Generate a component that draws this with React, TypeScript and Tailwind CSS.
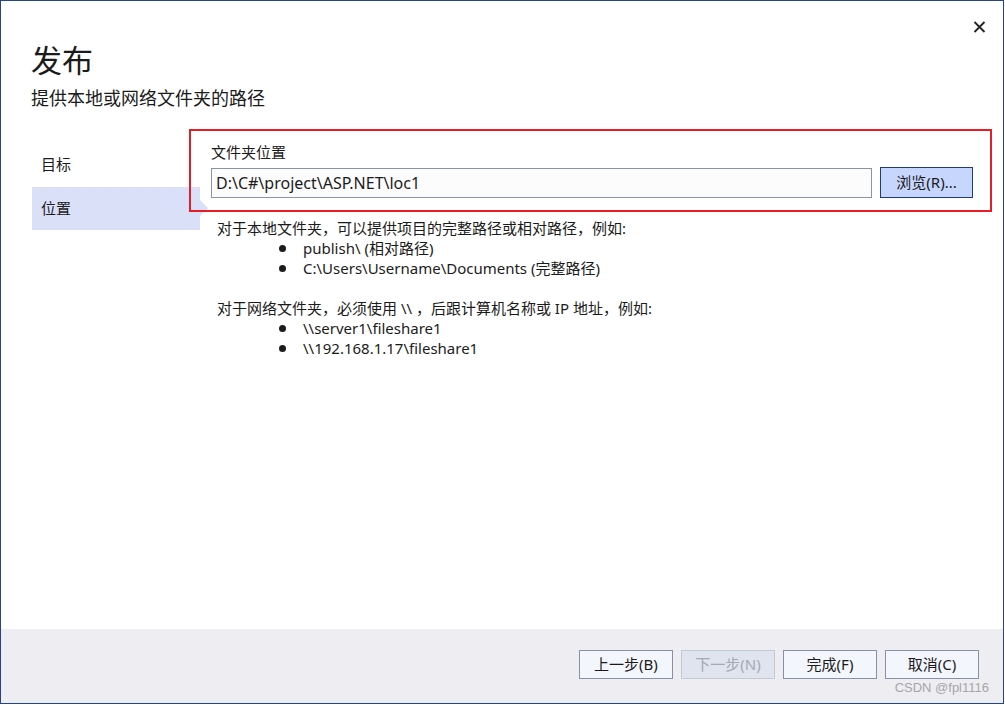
import React from 'react';

const Bullet = ({ children }: { children: React.ReactNode }) => (
  <li className="flex items-center pl-[62px] h-[20px]">
    <span className="w-[7px] h-[7px] rounded-full bg-[#1b1b1b] shrink-0"></span>
    <span className="ml-[17px]">{children}</span>
  </li>
);

const FooterButton = ({ label, disabled }: { label: string; disabled?: boolean }) => (
  <button
    type="button"
    disabled={disabled}
    className={
      disabled
        ? 'w-[94px] h-[29px] border border-[#c3cad6] bg-[#dfe4ee] text-[#a3a9b5] text-[15px] leading-none'
        : 'w-[94px] h-[29px] border border-[#8691a3] bg-[#f4f6fe] text-[#1b1b1b] text-[15px] leading-none'
    }
  >
    {label}
  </button>
);

export default function App() {
  return (
    <div className="w-[1004px] h-[704px] border border-[#24458a] bg-white flex flex-col relative text-[#1b1b1b] font-['Noto_Sans','Noto_Sans_CJK_SC',sans-serif]">
      <div className="flex-1 flex flex-col">
        {/* header */}
        <div className="flex justify-between items-start">
          <div className="pl-[30px] pt-[42px]">
            <h1 className="text-[31px] leading-[34px] font-normal">发布</h1>
            <p className="mt-[10px] text-[18px] leading-[22px]">提供本地或网络文件夹的路径</p>
          </div>
          <button type="button" className="mt-[19px] mr-[17px] w-[13px] h-[13px] flex items-center justify-center">
            <svg width="13" height="12" viewBox="0 0 13 12">
              <path d="M1.5 1 L11.5 11 M11.5 1 L1.5 11" stroke="#222" strokeWidth="1.8" fill="none" />
            </svg>
          </button>
        </div>

        {/* body */}
        <div className="flex mt-[33px]">
          <nav className="pl-[31px] w-[199px] shrink-0 flex flex-col text-[15px]">
            <div className="h-[45px] pl-[9px] flex items-center">目标</div>
            <div className="h-[43px] pl-[9px] flex items-center bg-[#d9e0f7] relative">
              位置
              <span className="absolute right-[-8px] top-[13px] w-0 h-0 border-y-[8px] border-y-transparent border-l-[8px] border-l-[#d9e0f7]"></span>
            </div>
          </nav>

          <div className="flex-1 ml-[11px] pr-[30px] text-[15px]">
            <div className="leading-[20px]">文件夹位置</div>
            <div className="flex items-center gap-[8px] mt-[5px]">
              <div className="flex-1 h-[30px] border border-[#8a94a6] bg-[#fcfcfc] flex items-center pl-[4px] text-[16px]">
                D:\C#\project\ASP.NET\loc1
              </div>
              <button type="button" className="w-[93px] h-[31px] border border-[#1f3c7d] bg-[#c6d6fc] text-[15px] leading-none">
                浏览(R)...
              </button>
            </div>

            <div className="mt-[20px] pl-[6px] leading-[20px]">
              <p>对于本地文件夹，可以提供项目的完整路径或相对路径，例如:</p>
              <ul>
                <Bullet>publish\ (相对路径)</Bullet>
                <Bullet>C:\Users\Username\Documents (完整路径)</Bullet>
              </ul>
              <p className="mt-[20px]">对于网络文件夹，必须使用 \\ ，后跟计算机名称或 IP 地址，例如:</p>
              <ul>
                <Bullet>\\server1\fileshare1</Bullet>
                <Bullet>\\192.168.1.17\fileshare1</Bullet>
              </ul>
            </div>
          </div>
        </div>
      </div>

      {/* footer */}
      <div className="h-[74px] bg-[#eeeef2] flex justify-end items-start pt-[21px] pr-[24px] gap-[8px]">
        <FooterButton label="上一步(B)" />
        <FooterButton label="下一步(N)" disabled />
        <FooterButton label="完成(F)" />
        <FooterButton label="取消(C)" />
      </div>

      {/* annotation box */}
      <div className="absolute left-[188px] top-[128px] w-[803px] h-[83px] border-2 border-[#e81c25] pointer-events-none"></div>

      <span className="absolute right-[14px] bottom-[7px] text-[13px] leading-[16px] text-[#a6a6a6] font-['Liberation_Sans',sans-serif]">
        CSDN @fpl1116
      </span>
    </div>
  );
}
